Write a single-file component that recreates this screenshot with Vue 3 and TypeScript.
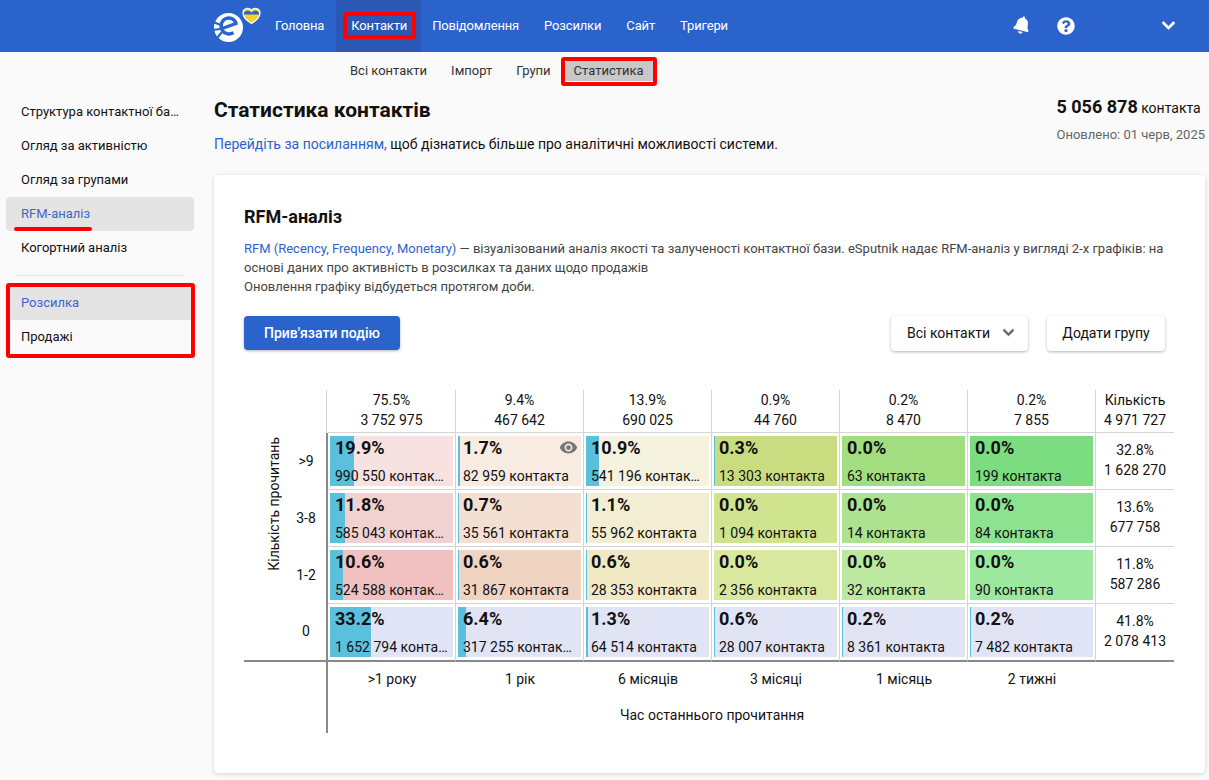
<script setup lang="ts">
interface Cell {
  pct: number
  count: string
  color: string
  eye?: boolean
}

const navItems = ["Головна", "Контакти", "Повідомлення", "Розсилки", "Сайт", "Тригери"]
const subItems = ["Всі контакти", "Імпорт", "Групи", "Статистика"]
const sideTop = ["Структура контактної бази", "Огляд за активністю", "Огляд за групами", "RFM-аналіз", "Когортний аналіз"]

const topHeaders = [
  ["75.5%", "3 752 975"],
  ["9.4%", "467 642"],
  ["13.9%", "690 025"],
  ["0.9%", "44 760"],
  ["0.2%", "8 470"],
  ["0.2%", "7 855"],
]

const rows: { label: string; share: string; total: string; cells: Cell[] }[] = [
  {
    label: ">9",
    share: "32.8%",
    total: "1 628 270",
    cells: [
      { pct: 19.9, count: "990 550 контакта", color: "#f7e2e1" },
      { pct: 1.7, count: "82 959 контакта", color: "#f7ebe2", eye: true },
      { pct: 10.9, count: "541 196 контакта", color: "#f5f2df" },
      { pct: 0.3, count: "13 303 контакта", color: "#c9dd80" },
      { pct: 0, count: "63 контакта", color: "#a2de80" },
      { pct: 0, count: "199 контакта", color: "#7cdc80" },
    ],
  },
  {
    label: "3-8",
    share: "13.6%",
    total: "677 758",
    cells: [
      { pct: 11.8, count: "585 043 контакта", color: "#f2d2d1" },
      { pct: 0.7, count: "35 561 контакта", color: "#f4e0d3" },
      { pct: 1.1, count: "55 962 контакта", color: "#f3edd3" },
      { pct: 0, count: "1 094 контакта", color: "#d0e38f" },
      { pct: 0, count: "14 контакта", color: "#ade38f" },
      { pct: 0, count: "84 контакта", color: "#8de28f" },
    ],
  },
  {
    label: "1-2",
    share: "11.8%",
    total: "587 286",
    cells: [
      { pct: 10.6, count: "524 588 контакта", color: "#f0c1c0" },
      { pct: 0.6, count: "31 867 контакта", color: "#f0d4c2" },
      { pct: 0.6, count: "28 353 контакта", color: "#f1e8c4" },
      { pct: 0, count: "2 356 контакта", color: "#d8e89f" },
      { pct: 0, count: "32 контакта", color: "#bce89f" },
      { pct: 0, count: "90 контакта", color: "#9de89f" },
    ],
  },
  {
    label: "0",
    share: "41.8%",
    total: "2 078 413",
    cells: [
      { pct: 33.2, count: "1 652 794 контакта", color: "#e1e4f4" },
      { pct: 6.4, count: "317 255 контакта", color: "#e1e4f4" },
      { pct: 1.3, count: "64 514 контакта", color: "#e1e4f4" },
      { pct: 0.6, count: "28 007 контакта", color: "#e1e4f4" },
      { pct: 0.2, count: "8 361 контакта", color: "#e1e4f4" },
      { pct: 0.2, count: "7 482 контакта", color: "#e1e4f4" },
    ],
  },
]

const periods = [">1 року", "1 рік", "6 місяців", "3 місяці", "1 місяць", "2 тижні"]

// bar never gets thinner than a pixel unless the value is really zero
const barStyle = (pct: number) => ({ width: pct > 0 ? `max(1px, ${pct}%)` : "0" })
</script>

<template>
  <div class="page">
    <header class="topbar">
      <svg class="logo" viewBox="0 0 48 36" width="48" height="36">
        <circle cx="15.5" cy="20.5" r="14.5" fill="#fff" />
        <path d="M0 15l8 3M0 23l7-1M4 31l5-6" stroke="#2b63cd" stroke-width="2.2" fill="none" />
        <path d="M9 21.500l14-5c-1-4.500-6-6.500-10-5-4.500 2-6 7-4 11.500 2.200 4 7 5 11.500 2.700" stroke="#2b63cd" stroke-width="3.400" fill="none" />
        <path d="M38.500 16.500c-6.500-4-8.500-7-8.500-10.500 0-5 6-6 8.500-2.500 2.500-3.500 8.500-2.500 8.500 2.500 0 3.500-2 6.500-8.500 10.500z" fill="#f5d327" stroke="#fff" stroke-width="1.300" />
        <path d="M30.800 7.500c-.3-4.300 5.400-5 7.700-1.800 2.300-3.200 8-2.500 7.700 1.800z" fill="#2b63cd" />
      </svg>
      <nav class="nav">
        <a v-for="item in navItems" :key="item" class="nav-link" :class="{ active: item === 'Контакти' }">
          {{ item }}
          <span v-if="item === 'Контакти'" class="mark mark-nav"></span>
        </a>
      </nav>
      <div class="top-icons">
        <svg class="bell" viewBox="0 0 448 512" width="16" height="18">
          <path fill="#fff" d="M224 512c35.32 0 63.97-28.65 63.97-64H160.03c0 35.35 28.65 64 63.97 64zm215.39-149.71c-19.32-20.76-55.47-51.99-55.47-154.29 0-77.7-54.48-139.9-127.94-155.16V32c0-17.67-14.32-32-31.98-32s-31.98 14.33-31.98 32v20.84C118.56 68.1 64.08 130.3 64.08 208c0 102.3-36.15 133.53-55.47 154.29-6 6.45-8.66 14.16-8.61 21.71.11 16.4 12.98 32 32.1 32h383.8c19.12 0 32-15.6 32.1-32 .05-7.55-2.61-15.27-8.61-21.71z" />
        </svg>
        <svg class="help" viewBox="0 0 512 512" width="18" height="18">
          <path fill="#fff" d="M504 256c0 136.997-111.043 248-248 248S8 392.997 8 256C8 119.083 119.043 8 256 8s248 111.083 248 248zM262.655 90c-54.497 0-89.255 22.957-116.549 63.758-3.536 5.286-2.353 12.415 2.715 16.258l34.699 26.31c5.205 3.947 12.621 3.008 16.665-2.122 17.864-22.658 30.113-35.797 57.303-35.797 20.429 0 45.698 13.148 45.698 32.958 0 14.976-12.363 22.667-32.534 33.976C247.128 238.528 216 254.941 216 296v4c0 6.627 5.373 12 12 12h56c6.627 0 12-5.373 12-12v-1.333c0-28.462 83.186-29.647 83.186-106.667 0-58.002-60.165-102-116.531-102zM256 338c-25.365 0-46 20.635-46 46 0 25.364 20.635 46 46 46s46-20.636 46-46c0-25.365-20.635-46-46-46z" />
        </svg>
        <svg class="chevron" viewBox="0 0 448 512" width="13" height="15">
          <path fill="#fff" stroke="#fff" stroke-width="20" d="M207.029 381.476L12.686 187.132c-9.373-9.373-9.373-24.569 0-33.941l22.667-22.667c9.357-9.357 24.522-9.375 33.901-.04L224 284.505l154.745-154.021c9.379-9.335 24.544-9.317 33.901.04l22.667 22.667c9.373 9.373 9.373 24.569 0 33.941L240.971 381.476c-9.373 9.372-24.569 9.372-33.942 0z" />
        </svg>
      </div>
    </header>

    <div class="subnav">
      <a v-for="item in subItems" :key="item" class="sub-link" :class="{ active: item === 'Статистика' }">
        {{ item }}
        <span v-if="item === 'Статистика'" class="mark mark-sub"></span>
      </a>
    </div>

    <div class="content">
      <aside class="sidebar">
        <a v-for="item in sideTop" :key="item" class="side-link" :class="{ active: item === 'RFM-аналіз' }">
          <span class="side-text">{{ item }}</span>
          <span v-if="item === 'RFM-аналіз'" class="underline"></span>
        </a>
        <div class="side-divider"></div>
        <div class="side-group">
          <a class="side-link flat current">Розсилка</a>
          <a class="side-link flat">Продажі</a>
          <span class="mark mark-side"></span>
        </div>
      </aside>

      <main class="main">
        <div class="heading">
          <div>
            <h1 class="title">Статистика контактів</h1>
            <p class="lead"><a class="link">Перейдіть за посиланням,</a> щоб дізнатись більше про аналітичні можливості системи.</p>
          </div>
          <div class="summary">
            <div class="summary-total"><b>5 056 878</b> контакта</div>
            <div class="summary-date">Оновлено: 01 черв, 2025</div>
          </div>
        </div>

        <section class="card">
          <h2 class="card-title">RFM-аналіз</h2>
          <p class="desc">
            <a class="link">RFM (Recency, Frequency, Monetary)</a> — візуалізований аналіз якості та залученості контактної бази. eSputnik надає RFM-аналіз у вигляді 2-х графіків: на<br />
            основі даних про активність в розсилках та даних щодо продажів<br />
            Оновлення графіку відбудеться протягом доби.
          </p>

          <div class="actions">
            <button class="btn primary">Прив'язати подію</button>
            <div class="actions-right">
              <button class="btn plain select">
                Всі контакти
                <svg viewBox="0 0 448 512" width="11" height="13">
                  <path fill="#666" stroke="#666" stroke-width="30" d="M207.029 381.476L12.686 187.132c-9.373-9.373-9.373-24.569 0-33.941l22.667-22.667c9.357-9.357 24.522-9.375 33.901-.04L224 284.505l154.745-154.021c9.379-9.335 24.544-9.317 33.901.04l22.667 22.667c9.373 9.373 9.373 24.569 0 33.941L240.971 381.476c-9.373 9.372-24.569 9.372-33.942 0z" />
                </svg>
              </button>
              <button class="btn plain add">Додати групу</button>
            </div>
          </div>

          <div class="matrix">
            <div class="corner"></div>
            <div v-for="h in topHeaders" :key="h[1]" class="head-cell">
              <span>{{ h[0] }}</span>
              <span>{{ h[1] }}</span>
            </div>
            <div class="head-cell last">
              <span>Кількість</span>
              <span>4 971 727</span>
            </div>

            <div class="y-title"><span>Кількість прочитань</span></div>

            <template v-for="(row, r) in rows" :key="row.label">
              <div class="row-label" :class="{ bottom: r === 3 }" :style="{ gridRow: r + 2 }">{{ row.label }}</div>
              <div v-for="cell in row.cells" :key="cell.count" class="data-cell" :class="{ bottom: r === 3 }">
                <div class="tile" :style="{ background: cell.color }">
                  <div class="bar" :style="barStyle(cell.pct)"></div>
                  <div class="tile-pct">{{ cell.pct.toFixed(1) }}%</div>
                  <div class="tile-count">{{ cell.count }}</div>
                  <svg v-if="cell.eye" class="eye" viewBox="0 0 24 24" width="19" height="19">
                    <path fill="#777" d="M12 4.500C7 4.500 2.730 7.610 1 12c1.730 4.390 6 7.500 11 7.500s9.270-3.110 11-7.500c-1.730-4.390-6-7.500-11-7.500zM12 17c-2.760 0-5-2.240-5-5s2.240-5 5-5 5 2.240 5 5-2.240 5-5 5zm0-8c-1.660 0-3 1.340-3 3s1.340 3 3 3 3-1.340 3-3-1.340-3-3-3z" />
                  </svg>
                </div>
              </div>
              <div class="total-cell" :class="{ bottom: r === 3 }">
                <span>{{ row.share }}</span>
                <span>{{ row.total }}</span>
              </div>
            </template>

            <div class="axis-stub"></div>
            <div v-for="p in periods" :key="p" class="period">{{ p }}</div>
            <div></div>

            <div class="axis-stub tall"></div>
            <div class="x-title">Час останнього прочитання</div>
          </div>
        </section>
      </main>
    </div>
  </div>
</template>

<style>
body {
  background: #fafafa;
}
</style>

<style scoped>
.page {
  height: 780px;
  overflow: hidden;
  background: #fafafa;
  color: #111;
  font-family: Roboto, "Liberation Sans", sans-serif;
  font-size: 14px;
}

.mark {
  position: absolute;
  border: 4px solid #f00;
  border-radius: 3px;
  pointer-events: none;
}

/* top bar */
.topbar {
  display: flex;
  align-items: stretch;
  height: 52px;
  padding-left: 213px;
  background: #2b63cd;
  color: #fff;
  font-size: 13px;
  letter-spacing: -0.15px;
}

.logo {
  flex: none;
  margin-top: 7px;
}

.nav {
  display: flex;
  margin-left: 1.5px;
}

.nav-link {
  position: relative;
  display: flex;
  align-items: center;
  padding: 0 12.5px 2px;
}

.nav-link.active {
  padding: 0 13.5px 2px 15.5px;
  margin: 0 -1px;
  background: #2a58b4;
}

.mark-nav {
  top: 12px;
  bottom: 13px;
  left: 7px;
  right: 5px;
}

.top-icons {
  display: flex;
  flex: 1;
  align-items: center;
  justify-content: flex-end;
  padding: 0 34px 0 0;
}

.bell {
  margin-right: 27px;
  margin-top: -3px;
  transform: rotate(14deg);
}

.help {
  margin-right: 87px;
}

.chevron {
  margin-top: -1px;
}

/* sub menu */
.subnav {
  display: flex;
  gap: 6px;
  height: 43px;
  padding: 9px 0 0 341px;
  box-sizing: border-box;
  font-size: 13px;
  color: #333;
}

.sub-link {
  position: relative;
  height: 20px;
  padding: 0 9px;
  line-height: 20px;
  border-radius: 3px;
}

.sub-link.active {
  margin-left: -1px;
  padding-right: 10px;
  background: #c8c8c8;
}

.mark-sub {
  top: -4px;
  bottom: -5px;
  left: -4px;
  right: -3px;
}

/* layout */
.content {
  display: flex;
}

.sidebar {
  flex: none;
  width: 188px;
  margin-left: 6px;
}

.side-link {
  position: relative;
  display: flex;
  align-items: center;
  height: 34px;
  padding: 0 15px 1px;
  font-size: 13px;
  border-radius: 4px;
  box-sizing: border-box;
}

.side-text {
  overflow: hidden;
  text-overflow: ellipsis;
  white-space: nowrap;
}

.side-link.active,
.side-link.current {
  background: #e4e4e4;
  color: #3f66c6;
}

.side-link.flat {
  border-radius: 0;
}

.underline {
  position: absolute;
  left: 8px;
  width: 78px;
  bottom: 0;
  height: 4px;
  border-radius: 2px;
  background: #f00;
}

.side-divider {
  height: 1px;
  margin: 10px 10px 10px;
  background: #e2e2e2;
}

.side-group {
  position: relative;
}

.mark-side {
  top: -3px;
  bottom: -4px;
  left: 0;
  right: -1px;
}

.main {
  flex: none;
  width: 991px;
  margin-left: 20px;
}

.heading {
  display: flex;
  justify-content: space-between;
  height: 80px;
}

.title {
  margin: 0;
  font-size: 21px;
  line-height: 30px;
  font-weight: 700;
  color: #111;
}

.lead {
  margin: 9px 0 0;
  line-height: 21px;
}

.link {
  color: #2b63cd;
}

.summary {
  padding-right: 0;
}

.summary-total {
  line-height: 24px;
}

.summary-total b {
  font-size: 18px;
  font-weight: 700;
}

.summary-date {
  margin-top: 5px;
  font-size: 13px;
  line-height: 20px;
  color: #666;
}

/* card */
.card {
  height: 598px;
  padding: 30px 40px 0 30px;
  box-sizing: border-box;
  background: #fff;
  border-radius: 4px;
  box-shadow: 0 1px 4px rgba(0, 0, 0, 0.16);
}

.card-title {
  margin: 0;
  font-size: 18px;
  line-height: 24px;
  font-weight: 700;
}

.desc {
  margin: 10px 0 0;
  font-size: 13px;
  line-height: 19px;
  color: #444;
  white-space: nowrap;
}

.actions {
  display: flex;
  justify-content: space-between;
  align-items: flex-start;
  margin-top: 20px;
}

.actions-right {
  display: flex;
  gap: 19px;
}

.btn {
  height: 35px;
  padding-bottom: 2px;
  border: 0;
  border-radius: 4px;
  font-family: inherit;
  font-size: 14px;
  box-shadow: 0 1px 3px rgba(0, 0, 0, 0.3);
}

.primary {
  width: 156px;
  height: 34px;
  background: #2b63cd;
  color: #fff;
  font-weight: 500;
}

.plain {
  background: #fff;
  color: #111;
}

.select {
  display: flex;
  align-items: center;
  justify-content: space-between;
  width: 137px;
  padding: 0 14px 2px 16px;
}

.add {
  width: 118px;
  padding: 0 0 2px;
}

/* matrix */
.matrix {
  display: grid;
  grid-template-columns: 42px 42px repeat(6, 128px) 78px;
  grid-template-rows: 43px 57px 57px 57px 58px 34px 37px;
  width: 930px;
  margin-top: 39px;
}

.corner {
  grid-column: 1 / 3;
  margin-right: 1px;
  border-right: 1px solid #d4d4d4;
}

.head-cell,
.total-cell {
  display: flex;
  flex-direction: column;
  align-items: center;
  justify-content: center;
  padding-bottom: 2px;
  box-sizing: border-box;
  line-height: 20px;
  border-bottom: 1px solid #d4d4d4;
}

.head-cell {
  border-right: 1px solid #d4d4d4;
}

.head-cell.last {
  border-right: 0;
}

.y-title {
  grid-column: 1;
  grid-row: 2 / 6;
  display: flex;
  align-items: flex-start;
  justify-content: flex-end;
  border-bottom: 2px solid #888;
}

.y-title span {
  writing-mode: vertical-rl;
  transform: rotate(180deg);
  margin-right: 4px;
  margin-top: 4px;
  white-space: nowrap;
}

.row-label {
  grid-column: 2;
  display: flex;
  align-items: center;
  justify-content: center;
  padding-bottom: 2px;
  box-sizing: border-box;
  border-right: 2px solid #888;
}

.data-cell {
  padding: 3px 2px;
  border-right: 1px solid #d4d4d4;
  border-bottom: 1px solid #d4d4d4;
}

.bottom {
  border-bottom: 2px solid #888;
}

.tile {
  position: relative;
  height: 50px;
  overflow: hidden;
}

.bar {
  position: absolute;
  top: 0;
  bottom: 0;
  left: 0;
  background: #5bc0de;
}

.tile-pct,
.tile-count {
  position: relative;
  padding: 0 5px;
  overflow: hidden;
  white-space: nowrap;
  text-overflow: ellipsis;
}

.tile-pct {
  height: 26px;
  font-size: 18px;
  font-weight: 700;
  line-height: 24px;
}

.tile-count {
  margin-top: 4px;
  line-height: 21px;
}

.eye {
  position: absolute;
  top: 2px;
  right: 3px;
}

.axis-stub {
  grid-column: 1 / 3;
  margin-left: 42px;
  border-right: 2px solid #888;
}

.period {
  display: flex;
  align-items: center;
  justify-content: center;
}

.x-title {
  grid-column: 3 / 9;
  display: flex;
  align-items: center;
  justify-content: center;
}
</style>
